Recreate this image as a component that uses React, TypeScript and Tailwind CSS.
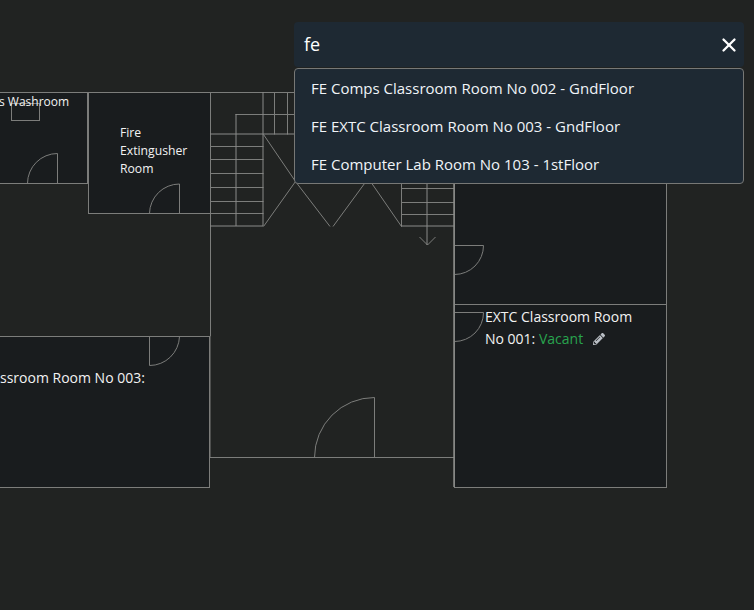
import React from "react";
import { X } from "lucide-react";
import { FaPencilAlt } from "react-icons/fa";

const results = [
  "FE Comps Classroom Room No 002 - GndFloor",
  "FE EXTC Classroom Room No 003 - GndFloor",
  "FE Computer Lab Room No 103 - 1stFloor",
];

// straight wall and stair segments of the floor plan: x1 y1 x2 y2
const lines = [
  [210.5, 92.5, 210.5, 336.5],
  [210, 336.5, 210, 457.5],
  [210.5, 92.5, 300, 92.5],
  [235.5, 114.5, 300, 114.5],
  [274.5, 92.5, 274.5, 134.5],
  [287.5, 92.5, 287.5, 134.5],
  [210.5, 146.5, 263.5, 146.5],
  [210.5, 159.5, 263.5, 159.5],
  [210.5, 173.5, 263.5, 173.5],
  [210.5, 187.5, 263.5, 187.5],
  [210.5, 201.5, 263.5, 201.5],
  [210.5, 213.5, 263.5, 213.5],
  [263.5, 134.5, 295.5, 181.5],
  [263.5, 226.5, 295.5, 181.5],
  [295.5, 181.5, 330, 226.5],
  [333, 226.5, 366, 181.5],
  [370.5, 181.5, 401.5, 226.5],
  [401.5, 183, 401.5, 226.5],
  [401.5, 188.5, 454, 188.5],
  [401.5, 202.5, 454, 202.5],
  [401.5, 214.5, 454, 214.5],
  [419.5, 237, 427.5, 245],
  [435.5, 237, 427.5, 245],
  [209.5, 457.5, 454, 457.5],
  [454.5, 304.5, 666.5, 304.5],
];

// stair strokes that fall between two pixel rows, so they read wider and softer
const softLines = [
  [236, 114, 236, 226],
  [263, 92, 263, 226],
  [210, 134, 300, 134],
  [210, 226, 263, 226],
  [401, 226, 454, 226],
  [427, 183, 427, 245],
];

// door swings: jamb plus quarter arc
const doors = [
  "M57.5 183.5V153.5A30 30 0 0 0 27.5 183.5",
  "M179.5 213.5V184A30 30 0 0 0 149.5 213.5",
  "M149.5 336.5V365.5A30 30 0 0 0 179.5 336.5",
  "M374.5 457.5V397.5A60 60 0 0 0 314.5 457.5",
  "M454.5 245.5H483.5A29 29 0 0 1 454.5 274.5",
  "M454.5 312.5H483.5A29 29 0 0 1 454.5 341.5",
];

const FloorPlan = () => (
  <svg className="absolute inset-0" width={754} height={610} fill="none">
    <g fill="#191c1e" stroke="#7c7d7b">
      <rect x={-5} y={92.5} width={92.5} height={91} />
      <rect x={88.5} y={92.5} width={122} height={121} />
      <rect x={-5} y={336.5} width={214.5} height={151} />
      <rect x={454.5} y={150.5} width={212} height={337} />
    </g>
    <rect x={11.5} y={103.5} width={28} height={17} stroke="#7c7d7b" />
    <g stroke="#7c7d7b">
      {lines.map((l, i) => (
        <line key={i} x1={l[0]} y1={l[1]} x2={l[2]} y2={l[3]} />
      ))}
      {doors.map((d, i) => (
        <path key={i} d={d} />
      ))}
    </g>
    <g stroke="#8a8b89">
      {softLines.map((l, i) => (
        <line key={i} x1={l[0]} y1={l[1]} x2={l[2]} y2={l[3]} />
      ))}
      <line x1={454} y1={183} x2={454} y2={487} strokeWidth={1.5} />
    </g>
  </svg>
);

export default function App() {
  return (
    <div className="relative w-[754px] h-[610px] overflow-hidden bg-[#212322] font-['Open_Sans',sans-serif] text-[#f2f2f2]">
      <FloorPlan />

      <div className="absolute -left-px top-[93px] text-[12px] leading-[18px] whitespace-nowrap">s Washroom</div>
      <div className="absolute left-[120px] top-[124px] text-[12.2px] leading-[18px]">
        Fire
        <br />
        Extingusher
        <br />
        Room
      </div>
      <div className="absolute left-0 top-[367px] text-[14px] leading-[22px] whitespace-nowrap">ssroom Room No 003:</div>
      <div className="absolute left-[485px] top-[306px] text-[14px] leading-[22px] whitespace-nowrap">
        <div>EXTC Classroom Room</div>
        <div className="flex items-center">
          No 001:&nbsp;<span className="text-[#28a44e]">Vacant</span>
          <FaPencilAlt className="ml-[10px] text-[12px] text-[#b9bec4]" />
        </div>
      </div>

      <div className="absolute left-[294px] top-[22px] w-[450px]">
        <div className="flex h-[45px] items-center justify-between rounded-[4px] bg-[#1e2933] pl-[10px] pr-[4px]">
          <span className="text-[18px] text-white">fe</span>
          <X className="h-[22px] w-[22px] text-white" strokeWidth={2.5} />
        </div>
        <div className="mt-[1px] flex h-[116px] flex-col justify-center rounded-[4px] border border-[#777876] bg-[#1e2933]">
          {results.map((r) => (
            <div key={r} className="flex h-[38px] items-center pl-[16px] text-[15px] text-[#f0f4f8]">
              {r}
            </div>
          ))}
        </div>
      </div>
    </div>
  );
}
